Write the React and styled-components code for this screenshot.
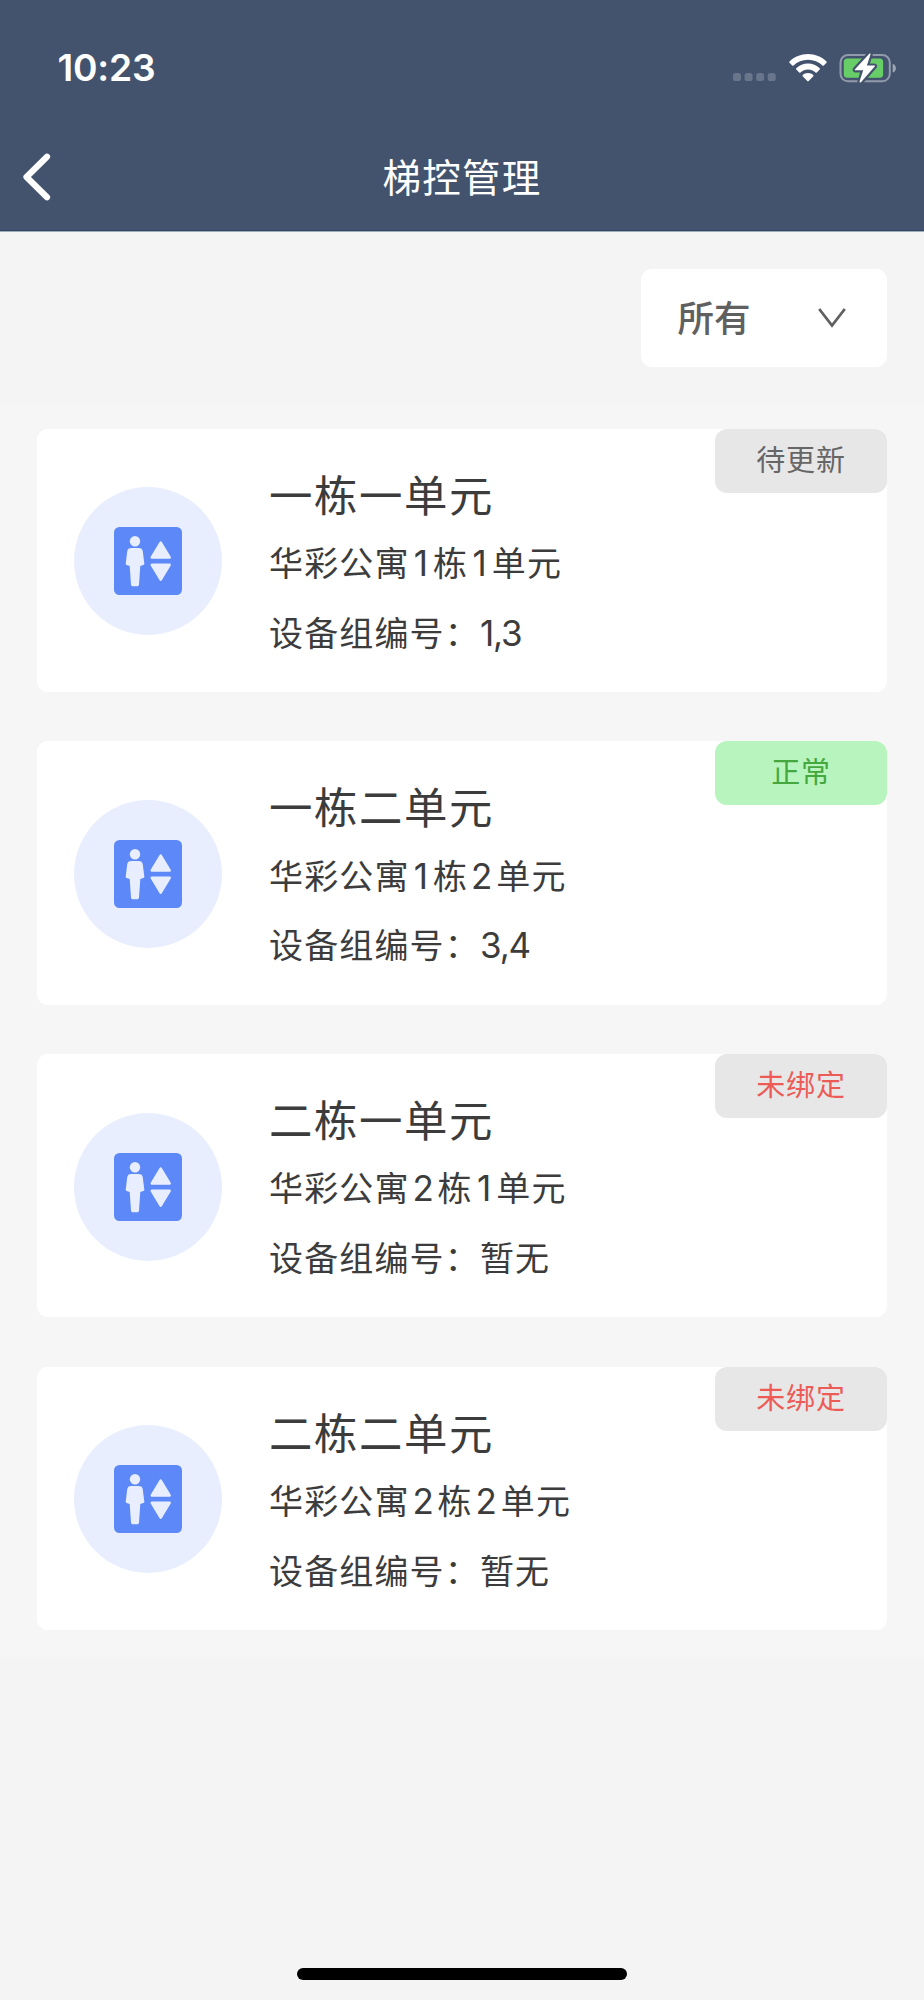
import React, { useState } from "react";
import styled, { createGlobalStyle } from "styled-components";

const GlobalStyle = createGlobalStyle`
  * {
    box-sizing: border-box;
  }
  body {
    margin: 0;
    background-color: #f4f4f4;
    font-family: Inter, "Noto Sans CJK SC", sans-serif;
  }
`;

const Page = styled.div`
  display: flex;
  flex-direction: column;
  height: 2000px;
  background-color: #f4f4f4;
  color: #3c3c3c;
`;

const Header = styled.header`
  height: 231px;
  background-color: #44536d;
  border-bottom: 1px solid #304567;
  box-shadow: 0 1px 0 #a3abb8;
  color: #fff;
`;

const StatusBar = styled.div`
  display: flex;
  align-items: center;
  justify-content: space-between;
  height: 124px;
  padding: 11px 27px 0 57.5px;
`;

const Time = styled.span`
  font-size: 37.2px;
  font-weight: 600;
  letter-spacing: -0.2px;
`;

const StatusIcons = styled.div`
  display: flex;
  align-items: center;
`;

const NavBar = styled.div`
  display: grid;
  grid-template-columns: 80px 1fr 80px;
  align-items: center;
  height: 106px;
`;

const BackButton = styled.button`
  display: flex;
  padding: 0 0 0 22px;
  border: none;
  background: none;
  color: inherit;
`;

const Title = styled.h1`
  margin: 0;
  padding-top: 2px;
  font-size: 38.5px;
  font-weight: 400;
  letter-spacing: 1.2px;
  line-height: 60px;
  text-align: center;
`;

const FilterRow = styled.div`
  display: flex;
  justify-content: flex-end;
  height: 173px;
  padding: 38px 37px 0;
`;

const Select = styled.button`
  display: flex;
  align-items: center;
  justify-content: space-between;
  width: 246px;
  height: 98px;
  padding: 0 41.5px 3px 36.5px;
  border: none;
  border-radius: 11px;
  background-color: #fff;
  color: #606060;
  font-family: inherit;
  font-size: 36.5px;
  font-weight: 500;
`;

const List = styled.div`
  display: flex;
  flex-direction: column;
  gap: 49.2px;
  padding: 24.6px 37px 27px;
  background-color: #f6f6f6;
`;

const Card = styled.div`
  position: relative;
  display: flex;
  gap: 47px;
  height: 263.5px;
  padding-left: 37px;
  border-radius: 11px;
  background-color: #fff;
`;

const Avatar = styled.div`
  display: flex;
  align-items: center;
  justify-content: center;
  align-self: center;
  width: 148px;
  height: 148px;
  margin-top: 1.6px;
  border-radius: 50%;
  background-color: #e8eefe;
`;

const Info = styled.div`
  padding-top: 35px;
`;

const Name = styled.div`
  margin-bottom: 1.4px;
  font-size: 43.4px;
  letter-spacing: 1.6px;
  line-height: 64px;
`;

const Line = styled.div`
  font-size: 34px;
  letter-spacing: 1.15px;
  line-height: 69.6px;
  white-space: nowrap;
`;

// digits sit in a slot of their own between the characters
const Digit = styled.span`
  display: inline-block;
  width: ${(props) => (props.$narrow ? "23.5px" : "28px")};
  padding-right: 1px;
  font-size: 35px;
  letter-spacing: 0;
  text-align: center;
`;

const Codes = styled.span`
  font-size: 35px;
  letter-spacing: -1.1px;
`;

const Badge = styled.div`
  position: absolute;
  top: 0;
  right: 0;
  width: 172px;
  height: 64px;
  border-radius: 12px;
  background-color: ${(props) => props.$bg};
  color: ${(props) => props.$color};
  font-size: 29px;
  letter-spacing: 0.8px;
  line-height: 64px;
  text-align: center;
`;

const Footer = styled.div`
  display: flex;
  align-items: flex-end;
  justify-content: center;
  flex: 1;
  padding-bottom: 20px;
`;

const HomeBar = styled.div`
  width: 330px;
  height: 12.5px;
  border-radius: 7px;
  background-color: #000;
`;

const badgeStyle = {
  待更新: { bg: "#e7e7e7", color: "#666" },
  正常: { bg: "#b8f4be", color: "#45a83f" },
  未绑定: { bg: "#e7e7e7", color: "#ec5b56" },
};

const units = [
  { name: "一栋一单元", address: "华彩公寓1栋1单元", codes: "1,3", status: "待更新" },
  { name: "一栋二单元", address: "华彩公寓1栋2单元", codes: "3,4", status: "正常" },
  { name: "二栋一单元", address: "华彩公寓2栋1单元", codes: "", status: "未绑定" },
  { name: "二栋二单元", address: "华彩公寓2栋2单元", codes: "", status: "未绑定" },
];

const DotsSvg = styled.svg`
  margin-top: 19px;
`;

const WifiSvg = styled.svg`
  margin-left: 13px;
`;

const BatterySvg = styled.svg`
  margin-left: 12.5px;
`;

const SignalDots = () => (
  <DotsSvg width="43" height="8" viewBox="0 0 43 8" fill="#69758a">
    <rect x="0" width="8" height="8" rx="2.6" />
    <rect x="11.6" width="8" height="8" rx="2.6" />
    <rect x="23.2" width="8" height="8" rx="2.6" />
    <rect x="34.7" width="8" height="8" rx="2.6" />
  </DotsSvg>
);

const WifiIcon = () => (
  <WifiSvg width="38" height="28" viewBox="0 0 38 28" fill="#fff">
    <path d="M19 0C11.9 0 5.3 2.8.5 7.4c-.4.4-.4.9 0 1.3l2.7 2.8c.4.4.9.4 1.3 0C8.3 7.9 13.4 5.8 19 5.8s10.7 2.1 14.5 5.7c.4.4.9.4 1.3 0l2.7-2.8c.4-.4.4-.9 0-1.3C32.7 2.8 26.1 0 19 0Z" />
    <path d="M19 9.6c-4.5 0-8.6 1.7-11.7 4.6-.4.4-.4.9 0 1.3l2.9 2.9c.4.4.9.4 1.3 0 2-1.8 4.6-2.9 7.5-2.9s5.5 1.1 7.5 2.9c.4.4.9.4 1.3 0l2.9-2.9c.4-.4.4-.9 0-1.3-3.1-2.9-7.2-4.6-11.7-4.6Z" />
    <path d="M19 19c-2 0-3.8.7-5.2 1.9-.5.4-.5.9-.1 1.3l4.6 4.8c.4.4 1 .4 1.4 0l4.6-4.8c.4-.4.4-.9-.1-1.3C22.8 19.7 21 19 19 19Z" />
  </WifiSvg>
);

const BatteryIcon = () => (
  <BatterySvg width="58" height="30" viewBox="0 0 58 30">
    <rect x="1.5" y="2.1" width="49.3" height="26.2" rx="7.5" fill="none" stroke="#929bab" strokeWidth="2" />
    <path d="M53.7 10.8c2 .7 3.2 2.4 3.2 4.4s-1.2 3.7-3.2 4.4Z" fill="#9da5b3" />
    <rect x="4.8" y="5.6" width="39.3" height="19.2" rx="3.5" fill="#67ce67" />
    <path
      d="M30.3.8 16 16.2c-.4.5-.2 1 .4 1h7.8L20.6 28.3c-.3 1.2.8 1.7 1.6.8L35.7 13.6c.4-.5.2-1-.4-1h-7.4L31.5 1.5c.3-1-.6-1.5-1.2-.7Z"
      fill="#fff"
      stroke="#44536d"
      strokeWidth="4.4"
      paintOrder="stroke"
    />
  </BatterySvg>
);

const BackIcon = () => (
  <svg width="30" height="48" viewBox="0 0 30 48" fill="none">
    <path d="M25 3.8 4.5 24 25 44.3" stroke="#fff" strokeWidth="6.2" strokeLinecap="round" strokeLinejoin="round" />
  </svg>
);

const ChevronSvg = styled.svg`
  margin-top: 2px;
`;

const ChevronIcon = () => (
  <ChevronSvg width="28" height="20" viewBox="0 0 28 20" fill="none">
    <path d="M1.2 1 14 17.5 26.8 1" stroke="#606060" strokeWidth="2.8" />
  </ChevronSvg>
);

const ElevatorIcon = () => (
  <svg width="68" height="68" viewBox="0 0 68 68" fill="#e8eefe">
    <rect width="68" height="68" rx="5.5" fill="#5d88f7" />
    <circle cx="21" cy="14.2" r="5.2" />
    <path d="M17.5 21h7c2.6 0 4 1.2 4.3 3.4l1.5 12c.1.9-.2 1.3-1 1.5l-3 1.1-1.3 18.5c-.1 1.2-.8 1.8-1.9 1.8h-4.2c-1.1 0-1.8-.6-1.9-1.8L15.7 39l-3-1.1c-.8-.2-1.1-.6-1-1.5l1.5-12c.3-2.2 1.7-3.4 4.3-3.4Z" />
    <path d="M46.7 15.7 37.8 30.4h17.8ZM46.7 52.7 37.8 37.9h17.8Z" stroke="#e8eefe" strokeWidth="2.6" strokeLinejoin="round" />
  </svg>
);

const Address = ({ text }) => (
  <Line>
    {text.split(/(\d)/).map((part, i) =>
      /\d/.test(part) ? (
        <Digit key={i} $narrow={part === "1"}>
          {part}
        </Digit>
      ) : (
        part
      )
    )}
  </Line>
);

const App = () => {
  const [filter] = useState("所有");

  return (
    <>
      <GlobalStyle />
      <Page>
        <Header>
          <StatusBar>
            <Time>10:23</Time>
            <StatusIcons>
              <SignalDots />
              <WifiIcon />
              <BatteryIcon />
            </StatusIcons>
          </StatusBar>
          <NavBar>
            <BackButton aria-label="返回">
              <BackIcon />
            </BackButton>
            <Title>梯控管理</Title>
          </NavBar>
        </Header>
        <FilterRow>
          <Select>
            {filter}
            <ChevronIcon />
          </Select>
        </FilterRow>
        <List>
          {units.map((unit) => (
            <Card key={unit.name}>
              <Avatar>
                <ElevatorIcon />
              </Avatar>
              <Info>
                <Name>{unit.name}</Name>
                <Address text={unit.address} />
                <Line>
                  设备组编号：<Codes>{unit.codes}</Codes>
                  {!unit.codes && "暂无"}
                </Line>
              </Info>
              <Badge $bg={badgeStyle[unit.status].bg} $color={badgeStyle[unit.status].color}>
                {unit.status}
              </Badge>
            </Card>
          ))}
        </List>
        <Footer>
          <HomeBar />
        </Footer>
      </Page>
    </>
  );
};

export default App;
